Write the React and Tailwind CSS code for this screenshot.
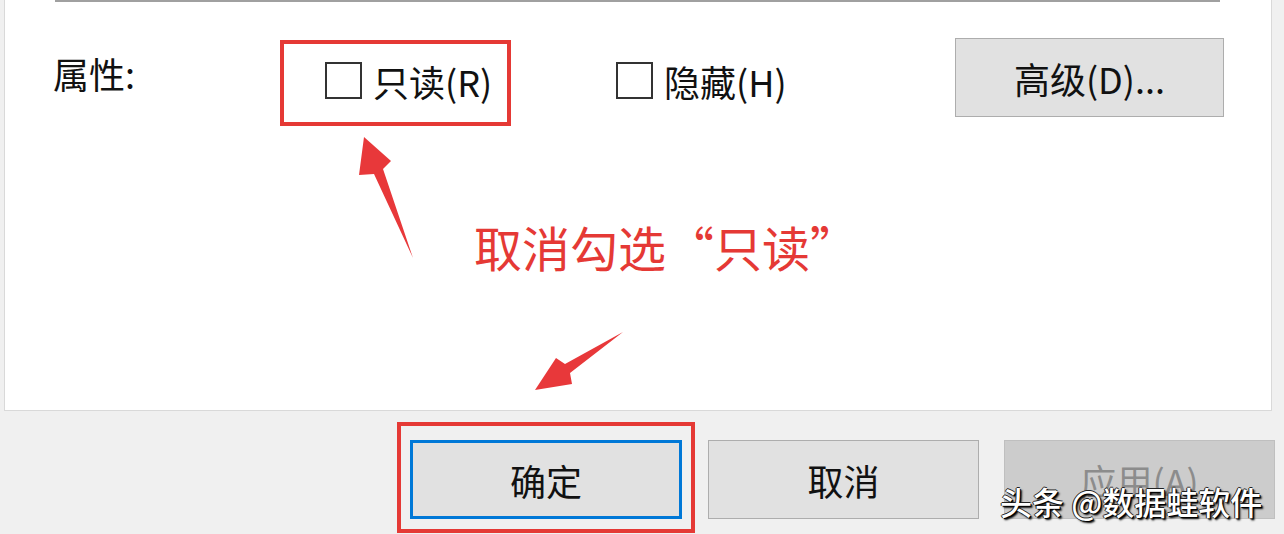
import React from 'react';

const font = "font-['Microsoft_YaHei','Noto_Sans_CJK_SC','Noto_Sans',sans-serif]";

function Checkbox({ label }) {
  return (
    <div className="flex items-center gap-[11px]">
      <span className="w-[37px] h-[37px] border-2 border-[#333333] bg-white" />
      <span className="text-[36px] leading-none text-[#111111]">{label}</span>
    </div>
  );
}

function DialogButton({ children, focused, disabled }) {
  const base = 'h-[79px] flex items-center justify-center text-[36px] leading-none';
  if (disabled) {
    return (
      <div className={`${base} w-[271px] bg-[#cccccc] border border-[#bfbfbf] text-[#8c8c8c]`}>
        {children}
      </div>
    );
  }
  if (focused) {
    return (
      <div className={`${base} w-[272px] bg-[#e1e1e1] border-[3px] border-[#0078d7] text-[#111111]`}>
        {children}
      </div>
    );
  }
  return (
    <div className={`${base} w-[271px] bg-[#e1e1e1] border border-[#adadad] text-[#111111]`}>
      {children}
    </div>
  );
}

export default function App() {
  return (
    <div className={`relative w-[1284px] h-[534px] overflow-hidden bg-[#f0f0f0] ${font}`}>
      {/* properties panel */}
      <div className="ml-[4px] w-[1268px] h-[411px] bg-white border-x border-b border-[#d9d9d9]">
        <div className="ml-[50px] w-[1165px] h-[2px] bg-[#a0a0a0]" />
        <div className="flex items-start mt-[36px]">
          <div className="w-[320px] pl-[48px] pt-[17px]">
            <span className="text-[36px] leading-none text-[#111111]">属性:</span>
          </div>
          <div className="w-[291px] pt-[24px]">
            <Checkbox label="只读(R)" />
          </div>
          <div className="w-[339px] pt-[24px]">
            <Checkbox label="隐藏(H)" />
          </div>
          <div className="w-[269px] h-[79px] flex items-center justify-center bg-[#e1e1e1] border border-[#adadad] text-[36px] leading-none text-[#111111]">
            高级(D)...
          </div>
        </div>
      </div>

      {/* footer buttons */}
      <div className="flex justify-end gap-[25px] pt-[29px] pr-[9px]">
        <DialogButton focused>确定</DialogButton>
        <div className="ml-[1px]">
          <DialogButton>取消</DialogButton>
        </div>
        <DialogButton disabled>应用(A)</DialogButton>
      </div>

      {/* annotations */}
      <div className="absolute left-[280px] top-[40px] w-[231px] h-[86px] border-4 border-[#e53935]" />
      <div className="absolute left-[397px] top-[422px] w-[298px] h-[111px] border-4 border-[#e53935]" />

      <div className="absolute left-[474px] top-[222px] text-[48px] leading-none text-[#e53935]">
        取消勾选“只读”
      </div>

      <svg className="absolute inset-0 pointer-events-none" width="1284" height="534" viewBox="0 0 1284 534">
        <polygon points="364,137 391,161 383,169 413,258 374,174 359,175" fill="#e8383a" />
        <polygon points="535,390 556,358 565,364 623,332 570,373 572,384" fill="#e8383a" />
      </svg>

      <div className="absolute left-[1000px] top-[485px] text-[32px] leading-none font-medium text-white [text-shadow:1px_1px_0_#000,-1px_0_0_#222,0_-1px_0_#222,2px_2px_2px_#000]">
        头条 @数据蛙软件
      </div>
    </div>
  );
}
